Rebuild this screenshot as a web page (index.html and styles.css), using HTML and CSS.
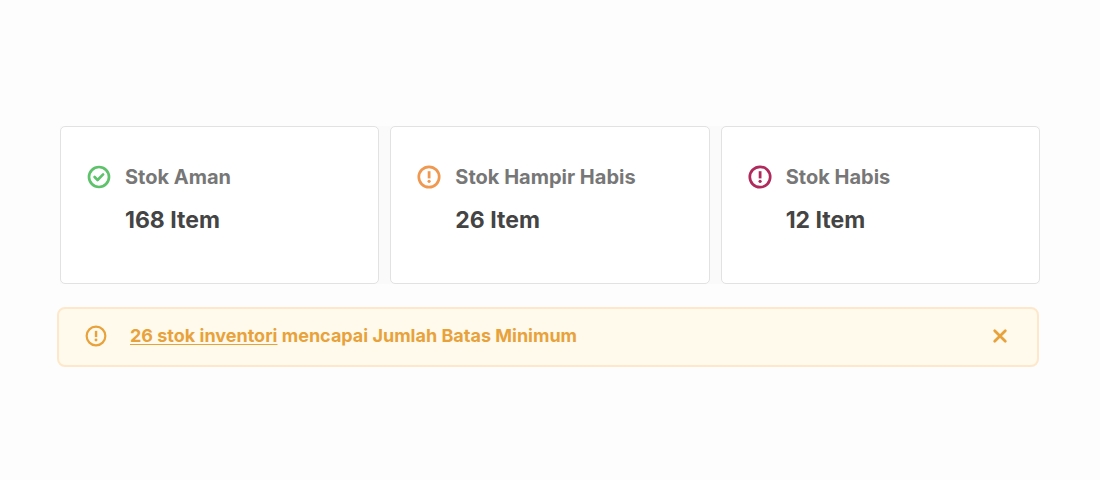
FILE: index.html
```html
<!DOCTYPE html>
<html lang="id">
<head>
<meta charset="utf-8">
<meta name="viewport" content="width=device-width, initial-scale=1">
<title>Stok</title>
<link rel="stylesheet" href="styles.css">
</head>
<body>
<main class="page">
  <section class="cards">
    <article class="card card-safe">
      <svg class="icon" viewBox="0 0 24 24" aria-hidden="true"><circle cx="12" cy="12" r="10"/><path d="M7.6 12l3 3 5.5-5.6"/></svg>
      <div class="card-text">
        <h2 class="card-label">Stok Aman</h2>
        <p class="card-value">168 Item</p>
      </div>
    </article>
    <article class="card card-low">
      <svg class="icon" viewBox="0 0 24 24" aria-hidden="true"><circle cx="12" cy="12" r="10.2"/><path class="mark" d="M10.7 6.2h2.8v7.2h-2.8z"/><circle class="mark" cx="12.1" cy="16.3" r="1.6"/></svg>
      <div class="card-text">
        <h2 class="card-label">Stok Hampir Habis</h2>
        <p class="card-value">26 Item</p>
      </div>
    </article>
    <article class="card card-empty">
      <svg class="icon" viewBox="0 0 24 24" aria-hidden="true"><circle cx="12" cy="12" r="10.2"/><path class="mark" d="M10.7 6.2h2.8v7.2h-2.8z"/><circle class="mark" cx="12.1" cy="16.3" r="1.6"/></svg>
      <div class="card-text">
        <h2 class="card-label">Stok Habis</h2>
        <p class="card-value">12 Item</p>
      </div>
    </article>
  </section>
  <div class="alert" role="status">
    <svg class="alert-icon" viewBox="0 0 24 24" aria-hidden="true"><circle cx="12" cy="12" r="10.2"/><path class="mark" d="M10.7 6.4h2.7v6.8h-2.7z"/><circle class="mark" cx="12" cy="16.3" r="1.6"/></svg>
    <p class="alert-text"><a class="alert-link" href="#">26 stok inventori</a> mencapai Jumlah Batas Minimum</p>
    <button class="close" type="button" aria-label="Tutup"><svg class="close-icon" viewBox="0 0 16 16" aria-hidden="true"><path d="M2.7 2.7l10.6 10.6M13.3 2.7L2.7 13.3"/></svg></button>
  </div>
</main>
</body>
</html>
```
FILE: styles.css
```css
* { box-sizing: border-box; }
body {
  margin: 0;
  background: #fdfdfd;
  font-family: Inter, "Liberation Sans", sans-serif;
}
h2, p { margin: 0; }
svg {
  display: block;
  flex: none;
  fill: none;
  stroke: currentColor;
  stroke-linecap: round;
  stroke-linejoin: round;
}
.mark {
  fill: currentColor;
  stroke: none;
}
.page { padding: 126px 60px 40px; }
.cards {
  display: grid;
  grid-template-columns: repeat(3, 1fr);
  gap: 11px;
  background: #fafafa;
}
.card {
  display: flex;
  gap: 14px;
  padding: 36px 26px 47px;
  background: #fff;
  border: 1px solid #e2e2e2;
  border-radius: 5px;
}
.icon {
  width: 24px;
  height: 24px;
  margin-top: 2px;
  stroke-width: 2.7;
}
.card-safe .icon { color: #5ec26a; }
.card-low .icon { color: #f0984f; }
.card-empty .icon { color: #b02a5b; }
.card-label {
  color: #777;
  font-size: 20px;
  line-height: 28px;
  font-weight: 700;
}
.card-value {
  margin-top: 13px;
  color: #444;
  font-size: 23px;
  line-height: 32px;
  font-weight: 700;
}
.alert {
  display: flex;
  align-items: center;
  margin: 23px 1px 0 -3px;
  padding: 14px 27px 16px 26px;
  background: #fffaeb;
  border: 2px solid #fde8cc;
  border-radius: 8px;
  color: #e8a23c;
}
.alert-icon {
  width: 22px;
  height: 22px;
  stroke-width: 2.4;
}
.alert-text {
  flex: 1;
  margin-left: 23px;
  font-size: 18px;
  line-height: 26px;
  font-weight: 700;
}
.alert-link {
  color: inherit;
  text-underline-offset: 2px;
}
.close {
  padding: 2px;
  border: 0;
  background: none;
  color: inherit;
  cursor: pointer;
}
.close-icon {
  width: 16px;
  height: 16px;
  stroke-width: 2.8;
}
```
